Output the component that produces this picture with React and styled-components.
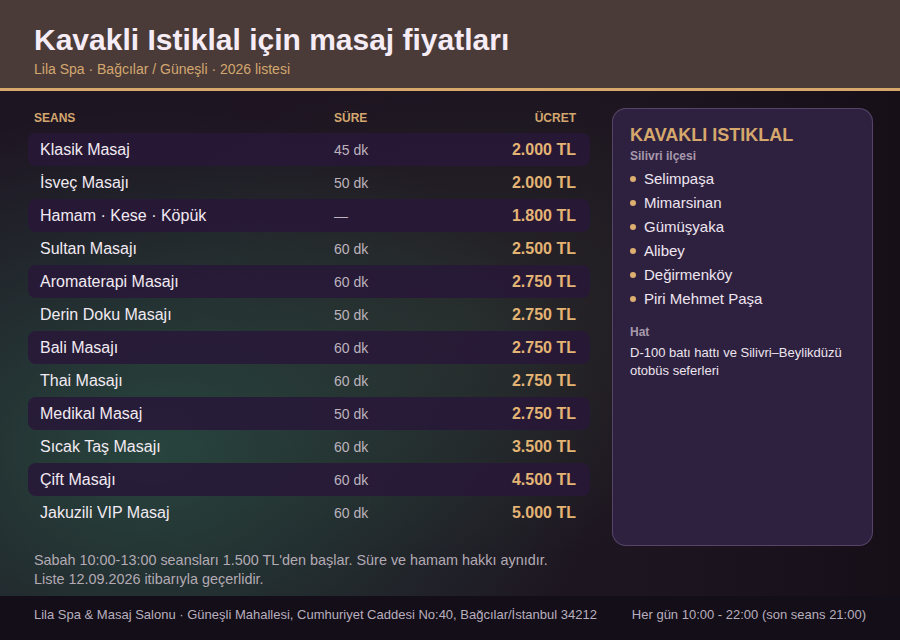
import React from "react"
import styled, { createGlobalStyle } from "styled-components"

const GlobalStyle = createGlobalStyle`
  html, body {
    margin: 0;
    padding: 0;
    background: #1c1320;
  }
  body {
    font-family: "Liberation Sans", Arial, sans-serif;
  }
`

const sessions = [
  { name: "Klasik Masaj", time: "45 dk", price: "2.000 TL" },
  { name: "İsveç Masajı", time: "50 dk", price: "2.000 TL" },
  { name: "Hamam · Kese · Köpük", time: "—", price: "1.800 TL" },
  { name: "Sultan Masajı", time: "60 dk", price: "2.500 TL" },
  { name: "Aromaterapi Masajı", time: "60 dk", price: "2.750 TL" },
  { name: "Derin Doku Masajı", time: "50 dk", price: "2.750 TL" },
  { name: "Bali Masajı", time: "60 dk", price: "2.750 TL" },
  { name: "Thai Masajı", time: "60 dk", price: "2.750 TL" },
  { name: "Medikal Masaj", time: "50 dk", price: "2.750 TL" },
  { name: "Sıcak Taş Masajı", time: "60 dk", price: "3.500 TL" },
  { name: "Çift Masajı", time: "60 dk", price: "4.500 TL" },
  { name: "Jakuzili VIP Masaj", time: "60 dk", price: "5.000 TL" },
]

const districts = ["Selimpaşa", "Mimarsinan", "Gümüşyaka", "Alibey", "Değirmenköy", "Piri Mehmet Paşa"]

class App extends React.Component {
  render() {
    return (
      <Page>
        <GlobalStyle />
        <Header>
          <Title>Kavakli Istiklal için masaj fiyatları</Title>
          <Subtitle>Lila Spa · Bağcılar / Güneşli · 2026 listesi</Subtitle>
        </Header>

        <Body>
          <Main>
            <Table>
              <HeadRow>
                <span>SEANS</span>
                <span>SÜRE</span>
                <HeadPrice>ÜCRET</HeadPrice>
              </HeadRow>
              {sessions.map((s, i) => (
                <Row key={s.name} $striped={i % 2 === 0}>
                  <Name>{s.name}</Name>
                  <Time>{s.time}</Time>
                  <Price>{s.price}</Price>
                </Row>
              ))}
            </Table>

            <Card>
              <CardTitle>KAVAKLI ISTIKLAL</CardTitle>
              <Label>Silivri ilçesi</Label>
              <List>
                {districts.map((d) => (
                  <Item key={d}>{d}</Item>
                ))}
              </List>
              <Label $top>Hat</Label>
              <Line>D-100 batı hattı ve Silivri–Beylikdüzü otobüs seferleri</Line>
            </Card>
          </Main>

          <Notes>
            <p>Sabah 10:00-13:00 seansları 1.500 TL'den başlar. Süre ve hamam hakkı aynıdır.</p>
            <p>Liste 12.09.2026 itibarıyla geçerlidir.</p>
          </Notes>
        </Body>

        <Footer>
          <span>Lila Spa &amp; Masaj Salonu · Güneşli Mahallesi, Cumhuriyet Caddesi No:40, Bağcılar/İstanbul 34212</span>
          <span>Her gün 10:00 - 22:00 (son seans 21:00)</span>
        </Footer>
      </Page>
    )
  }
}

const Page = styled.div`
  width: 900px;
  height: 640px;
  display: flex;
  flex-direction: column;
  overflow: hidden;
  background:
    radial-gradient(ellipse 460px 340px at 150px 450px, rgba(46, 100, 80, 0.6), rgba(46, 100, 80, 0) 100%),
    radial-gradient(ellipse 380px 240px at 470px 320px, rgba(62, 86, 62, 0.28), rgba(62, 86, 62, 0) 100%),
    linear-gradient(90deg, #1e1522 0%, #1d1520 70%, #170f18 100%);
`

const Header = styled.div`
  height: 66px;
  padding: 22px 34px 0;
  background: #4a3b38;
  flex-shrink: 0;
  border-bottom: 3px solid #d7a86c;
`

const Title = styled.h1`
  margin: 0;
  font-size: 30px;
  line-height: 36px;
  font-weight: 700;
  color: #f6ecf6;
`

const Subtitle = styled.div`
  margin-top: 2px;
  font-size: 14px;
  line-height: 18px;
  color: #d3a76f;
`

const Body = styled.div`
  flex: 1;
  display: flex;
  flex-direction: column;
  padding: 17px 27px 0 28px;
`

const Main = styled.div`
  display: grid;
  grid-template-columns: 562px 261px;
  column-gap: 22px;
  align-items: start;
`

const Table = styled.div`
  display: flex;
  flex-direction: column;
  padding-top: 2px;
`

const HeadRow = styled.div`
  display: grid;
  grid-template-columns: 300px 1fr auto;
  padding: 0 14px 0 6px;
  height: 16px;
  align-items: center;
  margin-bottom: 7px;
  font-size: 12px;
  font-weight: 700;
  color: #d3a76f;
`

const HeadPrice = styled.span`
  text-align: right;
`

const Row = styled.div`
  display: grid;
  grid-template-columns: 294px 1fr auto;
  align-items: center;
  height: 33px;
  box-sizing: border-box;
  padding: 0 14px 0 12px;
  border-radius: 8px;
  background: ${(p) => (p.$striped ? "rgba(40, 24, 56, 0.88)" : "transparent")};
`

const Name = styled.span`
  font-size: 16px;
  color: #f2eaf2;
`

const Time = styled.span`
  font-size: 14px;
  color: #bdb3bd;
`

const Price = styled.span`
  font-size: 16px;
  font-weight: 700;
  color: #e4b474;
  text-align: right;
`

const Card = styled.div`
  height: 438px;
  box-sizing: border-box;
  padding: 16px 17px;
  background: #2e2140;
  border: 1px solid rgba(190, 160, 210, 0.28);
  border-radius: 14px;
`

const CardTitle = styled.div`
  font-size: 18px;
  line-height: 20px;
  font-weight: 700;
  color: #d6a86c;
`

const Label = styled.div`
  margin-top: ${(p) => (p.$top ? "14px" : "3px")};
  font-size: 12px;
  line-height: 16px;
  font-weight: 700;
  color: #a899ac;
`

const List = styled.ul`
  list-style: none;
  margin: 2px 0 0;
  padding: 0;
`

const Item = styled.li`
  display: flex;
  align-items: center;
  height: 24px;
  font-size: 15px;
  color: #efe6ef;

  &::before {
    content: "";
    width: 6px;
    height: 6px;
    border-radius: 50%;
    background: #dcae70;
    margin: 2px 8px 0 0;
  }
`

const Line = styled.div`
  margin-top: 4px;
  font-size: 13px;
  line-height: 18px;
  color: #ede4ee;
  width: 222px;
`

const Notes = styled.div`
  margin-top: 5px;
  padding-left: 6px;
  font-size: 14.4px;
  line-height: 19px;
  color: #b3aab4;

  p {
    margin: 0;
  }
`

const Footer = styled.div`
  height: 44px;
  flex-shrink: 0;
  box-sizing: border-box;
  display: flex;
  align-items: flex-start;
  justify-content: space-between;
  padding: 11px 34px 0;
  line-height: 16px;
  background: #140e18;
  font-size: 13px;
  color: #b8afbe;
`

export default App
